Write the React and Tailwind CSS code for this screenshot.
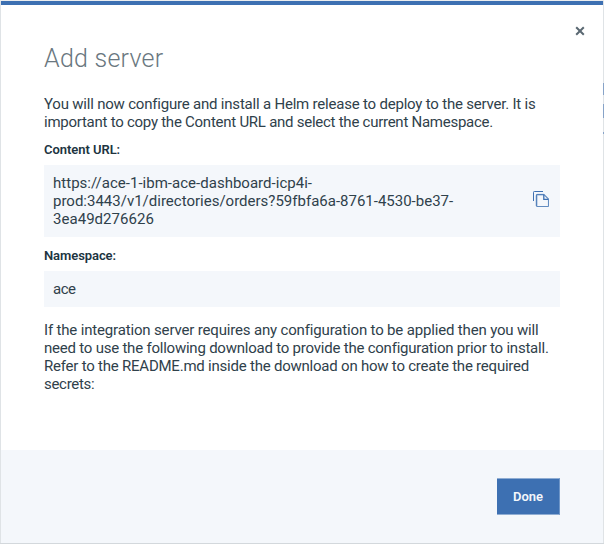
function CopyIcon() {
  return (
    <svg width="16" height="16" viewBox="0 0 16 16" fill="none" stroke="#3d70b2" className="block">
      <path d="M0.5 10V1.3Q0.5 0.5 1.3 0.5H10" />
      <path strokeOpacity="0.35" strokeWidth="2" d="M11 3.7H4.6Q3.6 3.7 3.6 4.7V15" />
      <path strokeOpacity="0.8" strokeWidth="1.1" d="M4.4 3.5H11L15.5 8V14.7Q15.5 15.5 14.7 15.5H4.4Q3.5 15.5 3.5 14.7V4.4Q3.5 3.5 4.4 3.5Z" />
      <path strokeWidth="1.3" d="M10.8 3.7V8.3H15.3" />
    </svg>
  );
}

function CloseIcon() {
  return (
    <svg width="10" height="10" viewBox="0 0 10 10" fill="none" stroke="#5a6872" strokeWidth="2" className="block">
      <path d="M1.2 1.2L8.8 8.8M8.8 1.2L1.2 8.8" />
    </svg>
  );
}

export default function App() {
  return (
    <div className="flex h-[544px] w-[604px] flex-col bg-[#ebedef] pt-px font-[Roboto,'Liberation_Sans',sans-serif] text-[#2f414b]">
      <div className="flex grow">
        <div className="w-px bg-[#dfe3e6]" />
        <section className="flex w-[602px] flex-col border-t-4 border-[#3d70b2] bg-white">
          <header className="flex h-[90px] justify-between pl-[43px] pr-[18px]">
            <h1 className="pt-[38px] text-[25px] font-light leading-8 tracking-[0.25px] whitespace-nowrap text-[#6a7780]">
              Add server
            </h1>
            <button aria-label="Close" className="mt-[21px] h-[10px]">
              <CloseIcon />
            </button>
          </header>
          <main className="flex h-[355px] flex-col px-[43px] text-[15px] leading-[18px] whitespace-nowrap">
            <p className="flex flex-col">
              <span className="tracking-[-0.204px]">You will now configure and install a Helm release to deploy to the server. It is</span>
              <span className="tracking-[-0.255px]">important to copy the Content URL and select the current Namespace.</span>
            </p>
            <h2 className="mt-[10px] text-[13px] font-semibold leading-[18px] tracking-[-0.05px] text-[#20343f]">Content URL:</h2>
            <div className="mt-[6px] flex h-[72px] w-[516px] items-center justify-between bg-[#f4f7fb] pl-[9px] pr-[11px]">
              <div className="flex flex-col">
                <span className="tracking-[0.02px]">https://ace-1-ibm-ace-dashboard-icp4i-</span>
                <span>prod:3443/v1/directories/orders?59fbfa6a-8761-4530-be37-</span>
                <span className="tracking-[0.04px]">3ea49d276626</span>
              </div>
              <button aria-label="Copy" className="mb-[4px]">
                <CopyIcon />
              </button>
            </div>
            <h2 className="mt-[10px] text-[13px] font-semibold leading-[18px] tracking-[-0.08px] text-[#20343f]">Namespace:</h2>
            <div className="mt-[6px] flex h-9 w-[516px] items-center bg-[#f4f7fb] pl-[9px] tracking-[-0.5px]">ace</div>
            <p className="mt-[14px] flex flex-col">
              <span className="tracking-[-0.164px]">If the integration server requires any configuration to be applied then you will</span>
              <span className="tracking-[-0.222px]">need to use the following download to provide the configuration prior to install.</span>
              <span className="tracking-[-0.222px]">Refer to the README.md inside the download on how to create the required</span>
              <span className="tracking-[-0.3px]">secrets:</span>
            </p>
          </main>
          <footer className="flex grow justify-end bg-[#f4f7fb] pr-[43px] pt-[28px]">
            <button className="h-[37px] w-[63px] border-y border-r border-y-[#8fadd3] border-r-[#6f96c8] bg-[#3d70b2] text-[13px] font-semibold text-[#f4f7fb]">
              Done
            </button>
          </footer>
        </section>
        <div className="flex w-px flex-col bg-[#dfe3e6] pt-[82px]">
          <div className="h-3 bg-[#87a3c8]" />
          <div className="mt-[9px] h-[14px] bg-[#87a3c8]" />
          <div className="mt-[14px] h-[2px] bg-[#87a3c8]" />
        </div>
      </div>
      <div className="h-px bg-[#d3d8dc]" />
    </div>
  );
}
